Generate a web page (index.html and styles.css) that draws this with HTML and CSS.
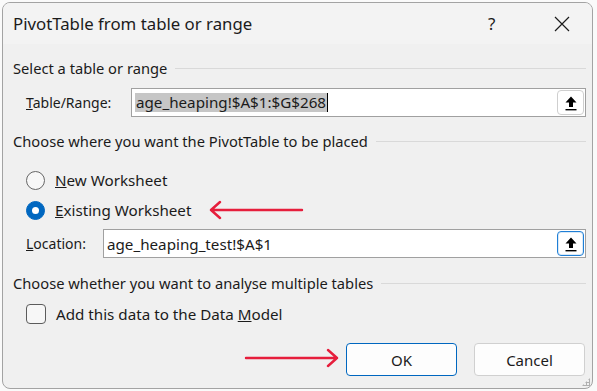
FILE: index.html
```html
<!DOCTYPE html>
<html lang="en">
<head>
  <meta charset="utf-8">
  <title>PivotTable from table or range</title>
  <link rel="stylesheet" href="styles.css">
</head>
<body>
  <div class="dialog">
    <div class="titlebar">
      <span class="title">PivotTable from table or range</span>
      <span class="help">?</span>
      <span class="close">
        <svg width="16" height="16" viewBox="0 0 16 16"><path d="M1 1L15 15M15 1L1 15" stroke="#1b1b1b" stroke-width="1.2" fill="none"/></svg>
      </span>
    </div>

    <div class="content">
      <div class="heading h1"><span>Select a table or range</span><i></i></div>
      <div class="field row-table">
        <label class="lbl-table"><u>T</u>able/Range:</label>
        <div class="input in-table">
          <span class="text"><span class="sel">age_heaping!$A$1:$G$268</span><span class="caret"></span></span>
          <span class="pick">
            <svg width="14" height="16" viewBox="0 0 14 16"><path d="M7 1.5L12.5 7.5H9V12H5V7.5H1.5Z" fill="#000"/><rect x="1.5" y="14" width="11" height="1.4" fill="#000"/></svg>
          </span>
        </div>
      </div>

      <div class="heading h2"><span>Choose where you want the PivotTable to be placed</span><i></i></div>
      <div class="option r1"><span class="radio"></span><span><u>N</u>ew Worksheet</span></div>
      <div class="option r2"><span class="radio on"></span><span><u>E</u>xisting Worksheet</span></div>
      <div class="field row-loc">
        <label class="lbl-loc"><u>L</u>ocation:</label>
        <div class="input in-loc">
          <span class="text">age_heaping_test!$A$1</span>
          <span class="pick focus">
            <svg width="14" height="16" viewBox="0 0 14 16"><path d="M7 1.5L12.5 7.5H9V12H5V7.5H1.5Z" fill="#000"/><rect x="1.5" y="14" width="11" height="1.4" fill="#000"/></svg>
          </span>
        </div>
      </div>

      <div class="heading h3"><span>Choose whether you want to analyse multiple tables</span><i></i></div>
      <div class="option c1"><span class="check"></span><span>Add this data to the Data <u>M</u>odel</span></div>

      <div class="buttons">
        <button class="btn default">OK</button>
        <button class="btn">Cancel</button>
      </div>
    </div>

    <span class="grip"></span>

    <!-- annotation arrows -->
    <svg class="arrow a1" width="100" height="20" viewBox="0 0 100 20"><path d="M96 10H5M14 2L5 10L14 18" stroke="#e61e3c" stroke-width="2.4" fill="none" stroke-linecap="round" stroke-linejoin="round"/></svg>
    <svg class="arrow a2" width="100" height="20" viewBox="0 0 100 20"><path d="M3 10H94M85 2L94 10L85 18" stroke="#e61e3c" stroke-width="2.4" fill="none" stroke-linecap="round" stroke-linejoin="round"/></svg>
  </div>
</body>
</html>
```

FILE: styles.css
```css
:root {
  --bg: #f0f0f0;
  --title-bg: #f3f3f3;
  --text: #1b1b1b;
  --accent: #0067c0;
  --line: #d9d9d9;
}
* { box-sizing: border-box; margin: 0; padding: 0; }
body {
  font-family: "Segoe UI", "Noto Sans", sans-serif;
  font-size: 14.7px;
  color: var(--text);
  background: #fafafa;
  padding: 2px 4px 0 2px;
}
.dialog {
  position: relative;
  width: 591px;
  height: 387px;
  background: var(--bg);
  border: 1px solid #a3a3a3;
  border-radius: 8px;
  overflow: hidden;
}
/* title bar */
.titlebar {
  height: 41px;
  background: var(--title-bg);
  display: flex;
  align-items: center;
  padding-left: 10px;
}
.title { font-size: 16.8px; }
.help {
  margin-left: auto;
  font-size: 17px;
  width: 12px;
}
.close {
  display: flex;
  margin: 0 22px 0 54px;
}
/* body */
.content { padding: 0 6px 0 10px; }
.heading {
  display: flex;
  align-items: center;
  height: 20px;
  gap: 8px;
}
.heading i {
  flex: 1;
  height: 1px;
  background: var(--line);
  margin-top: 1px;
}
.h1 { margin-top: 14px; }
.h2 { margin-top: 14px; }
.h3 { margin-top: 15px; }
.field {
  display: flex;
  align-items: center;
  height: 29px;
  padding-left: 13px;
  font-size: 14px;
}
.row-table { margin-top: 10px; }
.row-loc { margin-top: 9px; }
.lbl-table { width: 105px; }
.lbl-loc { width: 77px; }
.input {
  flex: 1;
  height: 29px;
  background: #fff;
  border: 1px solid #a0a0a0;
  display: flex;
  align-items: center;
  padding-left: 3px;
}
.input .text {
  flex: 1;
  font-size: 15.2px;
  display: flex;
  align-items: center;
}
.sel { background: #c6c6c6; padding: 0 1px; line-height: 19px; }
.caret {
  width: 1px;
  height: 19px;
  background: #000;
}
.pick {
  width: 27px;
  height: 25px;
  margin-right: 1px;
  border: 1px solid #cfcfcf;
  border-radius: 4px;
  display: flex;
  align-items: center;
  justify-content: center;
  background: #fff;
}
.pick.focus {
  border: 1.5px solid #1f7fd6;
  box-shadow: inset 0 0 0 1px #d9e9f7;
}
.option {
  display: flex;
  align-items: center;
  gap: 10px;
  height: 20px;
  padding-left: 13px;
  font-size: 15.2px;
}
.r1 { margin-top: 19px; }
.r2 { margin-top: 10px; }
.c1 { margin-top: 11px; }
.radio {
  width: 19px;
  height: 19px;
  border-radius: 50%;
  border: 1px solid #666;
  background: #f7f7f7;
}
.radio.on {
  background: var(--accent);
  border-color: var(--accent);
  position: relative;
}
.radio.on::after {
  content: "";
  position: absolute;
  left: 5px; top: 5px;
  width: 7px; height: 7px;
  border-radius: 50%;
  background: #fff;
}
.check {
  width: 20px;
  height: 20px;
  border: 1px solid #5c5c5c;
  border-radius: 4px;
  background: #f7f7f7;
}
.buttons {
  display: flex;
  justify-content: flex-end;
  gap: 17px;
  margin-top: 19px;
  padding-right: 1px;
}
.btn {
  width: 111px;
  height: 33px;
  font: inherit;
  font-size: 15px;
  color: var(--text);
  background: #fdfdfd;
  border: 1px solid #d0d0d0;
  border-radius: 4px;
}
.btn.default { border-color: var(--accent); }
.grip {
  position: absolute;
  right: 2px; bottom: 2px;
  width: 8px; height: 8px;
  background: radial-gradient(circle, #b0b0b0 1px, transparent 1.2px) 0 0 / 3px 3px;
  clip-path: polygon(100% 0, 100% 100%, 0 100%);
}
/* red annotation arrows */
.arrow { position: absolute; }
.a1 { left: 203px; top: 197px; }
.a2 { left: 240px; top: 345px; }
```
